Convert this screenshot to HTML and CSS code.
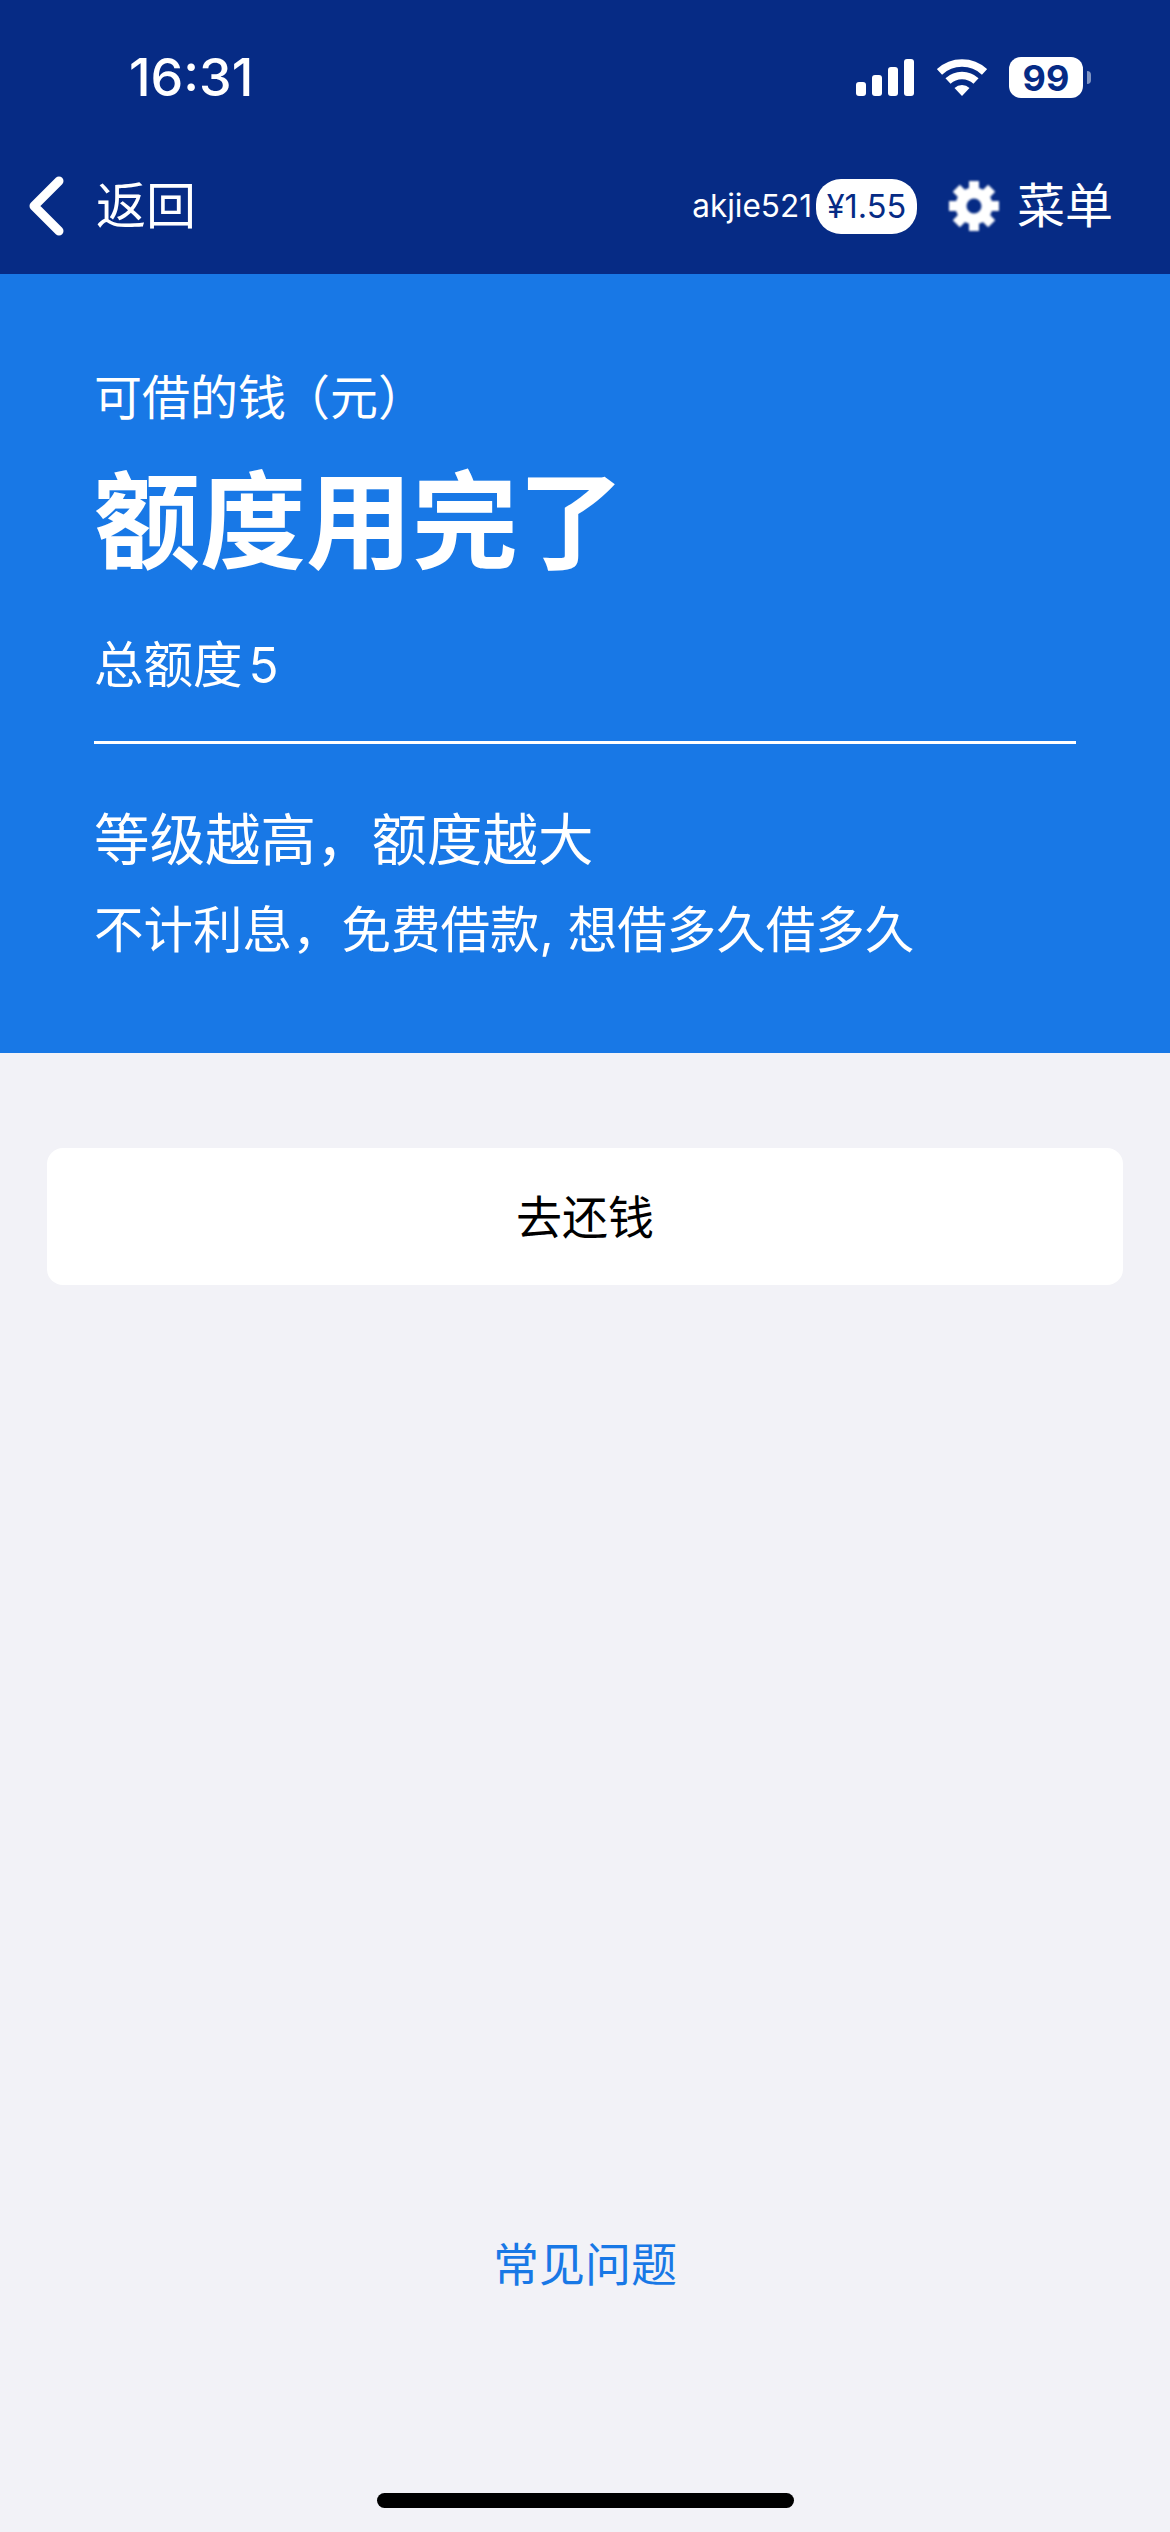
FILE: index.html
```html
<!DOCTYPE html>
<html lang="zh-CN">
  <head>
    <meta charset="UTF-8" />
    <meta name="viewport" content="width=device-width, initial-scale=1.0" />
    <title>可借的钱</title>
    <link rel="stylesheet" href="styles.css">
  </head>
  <body>
    <div class="page">
      <header class="top">
        <div class="status">
          <span class="time">16:31</span>
          <div class="status-icons">
            <svg class="signal" width="58" height="37" viewBox="0 0 58 37" fill="#fff">
              <rect x="0" y="23" width="10" height="14" rx="3" />
              <rect x="16" y="16" width="10" height="21" rx="3" />
              <rect x="32" y="8" width="10" height="29" rx="3" />
              <rect x="48" y="0" width="10" height="37" rx="3" />
            </svg>
            <svg class="wifi" width="50" height="37" viewBox="0 0 50 37" fill="none" stroke="#fff" stroke-width="7.5">
              <path d="M2.5 12.9A33 33 0 0 1 47.5 12.9" />
              <path d="M11 22A20.5 20.5 0 0 1 39 22" />
              <path d="M25 37L17.5 29A11 11 0 0 1 32.5 29Z" fill="#fff" stroke="none" />
            </svg>
            <div class="battery"><span>99</span></div>
            <div class="battery-nub"></div>
          </div>
        </div>
        <nav class="nav">
          <a class="back">
            <svg width="36" height="60" viewBox="0 0 36 60" fill="none" stroke="#fff" stroke-width="9" stroke-linecap="round" stroke-linejoin="round">
              <polyline points="30,5 5,30 30,55" />
            </svg>
            <span>返回</span>
          </a>
          <div class="nav-right">
            <span class="user">akjie521</span>
            <span class="money">¥1.55</span>
            <svg class="gear" width="50" height="50" viewBox="0 0 50 50" fill="#fff">
              <circle cx="25" cy="25" r="13" fill="none" stroke="#fff" stroke-width="11" />
              <rect x="20" y="0" width="10" height="10" />
              <rect x="20" y="0" width="10" height="10" transform="rotate(45 25 25)" />
              <rect x="20" y="0" width="10" height="10" transform="rotate(90 25 25)" />
              <rect x="20" y="0" width="10" height="10" transform="rotate(135 25 25)" />
              <rect x="20" y="0" width="10" height="10" transform="rotate(180 25 25)" />
              <rect x="20" y="0" width="10" height="10" transform="rotate(225 25 25)" />
              <rect x="20" y="0" width="10" height="10" transform="rotate(270 25 25)" />
              <rect x="20" y="0" width="10" height="10" transform="rotate(315 25 25)" />
            </svg>
            <span class="menu">菜单</span>
          </div>
        </nav>
      </header>

      <section class="hero">
        <div class="label">可借的钱<span class="unit">（元）</span></div>
        <div class="amount">额度用完了</div>
        <div class="total">总额度 5</div>
        <div class="line"></div>
        <div class="tier">等级越高，额度越大</div>
        <div class="tip">不计利息，免费借款, 想借多久借多久</div>
      </section>

      <button class="repay" type="button">去还钱</button>

      <a class="faq">常见问题</a>
      <div class="home-bar"></div>
    </div>
  </body>
</html>
```
FILE: styles.css
```css
* {
  box-sizing: border-box;
}
body {
  margin: 0;
  background: #f2f2f7;
  font-family: Inter, "Noto Sans CJK SC", sans-serif;
}
.page {
  display: flex;
  flex-direction: column;
  height: 2532px;
  overflow: hidden;
}
.top {
  background: #062b85;
  color: #fff;
  height: 274px;
}
.status {
  display: flex;
  justify-content: space-between;
  align-items: center;
  height: 150px;
  padding: 5px 79px 0 129px;
}
.time {
  font-size: 52px;
  font-weight: 500;
  line-height: 60px;
}
.status-icons {
  display: flex;
  align-items: center;
}
.signal {
  margin-right: 23px;
}
.wifi {
  margin-right: 22px;
}
.battery {
  display: flex;
  align-items: center;
  justify-content: center;
  width: 74px;
  height: 41px;
  background: #fff;
  border-radius: 12px;
  color: #062b85;
  font-size: 36px;
  font-weight: 700;
}
.battery-nub {
  width: 4px;
  height: 13px;
  margin-left: 4px;
  background: #8095c2;
  border-radius: 0 4px 4px 0;
}
.nav {
  display: flex;
  justify-content: space-between;
  align-items: center;
  height: 124px;
  padding: 0 57px 12px 29px;
}
.back {
  display: flex;
  align-items: center;
  font-size: 50px;
  line-height: 50px;
}
.back span {
  margin-left: 31px;
}
.nav-right {
  display: flex;
  align-items: center;
}
.user {
  font-size: 31.5px;
  line-height: 40px;
}
.money {
  display: flex;
  align-items: center;
  justify-content: center;
  width: 101px;
  height: 55px;
  margin-left: 4px;
  background: #fff;
  border-radius: 25px;
  color: #062b85;
  font-size: 32.5px;
}
.gear {
  margin-left: 32px;
  filter: blur(1px);
}
.menu {
  margin-left: 18px;
  font-size: 48px;
  line-height: 50px;
}
.hero {
  height: 779px;
  padding: 94px 94px 0;
  background: #1878e6;
  color: #fff;
}
.label,
.total,
.tip {
  font-size: 48px;
  line-height: 60px;
}
.unit {
  margin-left: -4px;
}
.amount {
  margin-top: 34px;
  font-size: 106px;
  font-weight: 700;
  line-height: 120px;
}
.total {
  margin-top: 53px;
  font-size: 49.5px;
  word-spacing: -8px;
}
.line {
  height: 3px;
  margin-top: 46px;
  background: #fff;
}
.tier {
  margin-top: 61px;
  font-size: 55.5px;
  line-height: 70px;
}
.tip {
  margin-top: 25px;
  font-size: 49.5px;
}
.repay {
  display: block;
  height: 137px;
  margin: 95px 47px 0;
  padding: 0 0 6px;
  border: none;
  border-radius: 16px;
  background: #fff;
  color: #000;
  font-family: inherit;
  font-size: 46px;
}
.faq {
  margin-top: auto;
  color: #1878e6;
  font-size: 46px;
  line-height: 60px;
  text-align: center;
}
.home-bar {
  width: 417px;
  height: 15px;
  margin: 199px auto 24px;
  background: #000;
  border-radius: 8px;
}
```
